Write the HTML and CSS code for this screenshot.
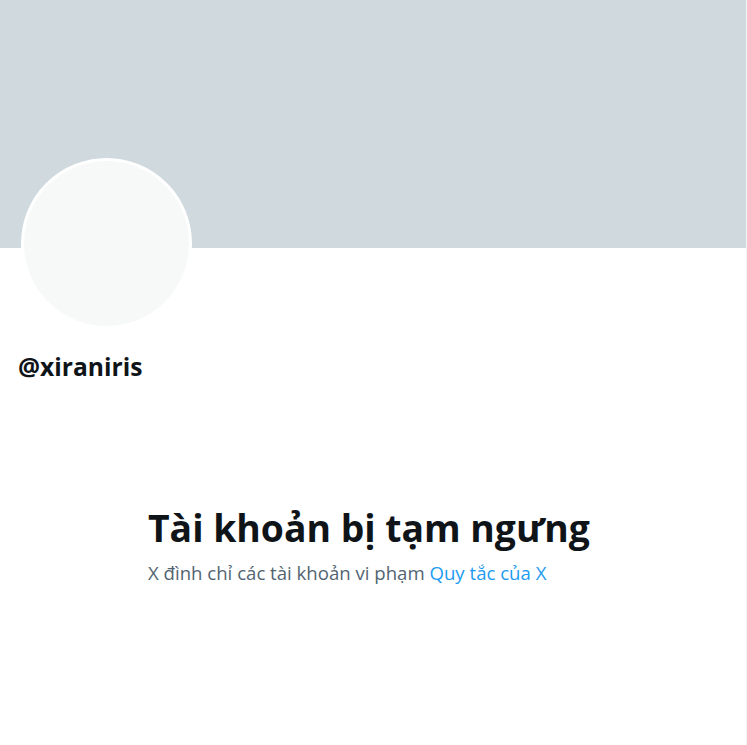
FILE: index.html
```html
<!DOCTYPE html>
<html lang="vi">
<head>
<meta charset="utf-8">
<link rel="stylesheet" href="styles.css">
</head>
<body>
<main class="column">
  <div class="banner"></div>
  <div class="profile">
    <div class="avatar"></div>
    <div class="handle">@xiraniris</div>
  </div>
  <section class="empty">
    <h1 class="empty-title">Tài khoản bị tạm ngưng</h1>
    <p class="empty-text">X đình chỉ các tài khoản vi phạm <a class="link" href="#">Quy tắc của X</a></p>
  </section>
</main>
</body>
</html>
```
FILE: styles.css
```css
html, body {
  margin: 0;
  padding: 0;
  background: #ffffff;
}
body {
  font-family: "Open Sans", "Noto Sans", sans-serif;
  color: #0f1419;
}
.column {
  width: 746px;
  min-height: 745px;
  border-right: 1px solid #eff3f4;
}
.banner {
  height: 248px;
  background: #cfd9de;
}
.profile {
  padding: 0 18px;
}
.avatar {
  width: 165px;
  height: 165px;
  border: 3.5px solid #ffffff;
  border-radius: 50%;
  margin: -90px 0 0 2.7px;
  background: #f7f9f9;
  position: relative;
}
.handle {
  margin-top: 23px;
  font-size: 24.6px;
  font-weight: 700;
  line-height: 30px;
}
.empty {
  width: 450px;
  margin: 123.5px auto 0;
}
.empty-title {
  margin: 0;
  font-size: 37.3px;
  font-weight: 700;
  line-height: 44px;
}
.empty-text {
  margin: 11.5px 0 0;
  font-size: 18.6px;
  line-height: 24px;
  color: #536471;
}
.link {
  color: #1d9bf0;
  text-decoration: none;
}
```
